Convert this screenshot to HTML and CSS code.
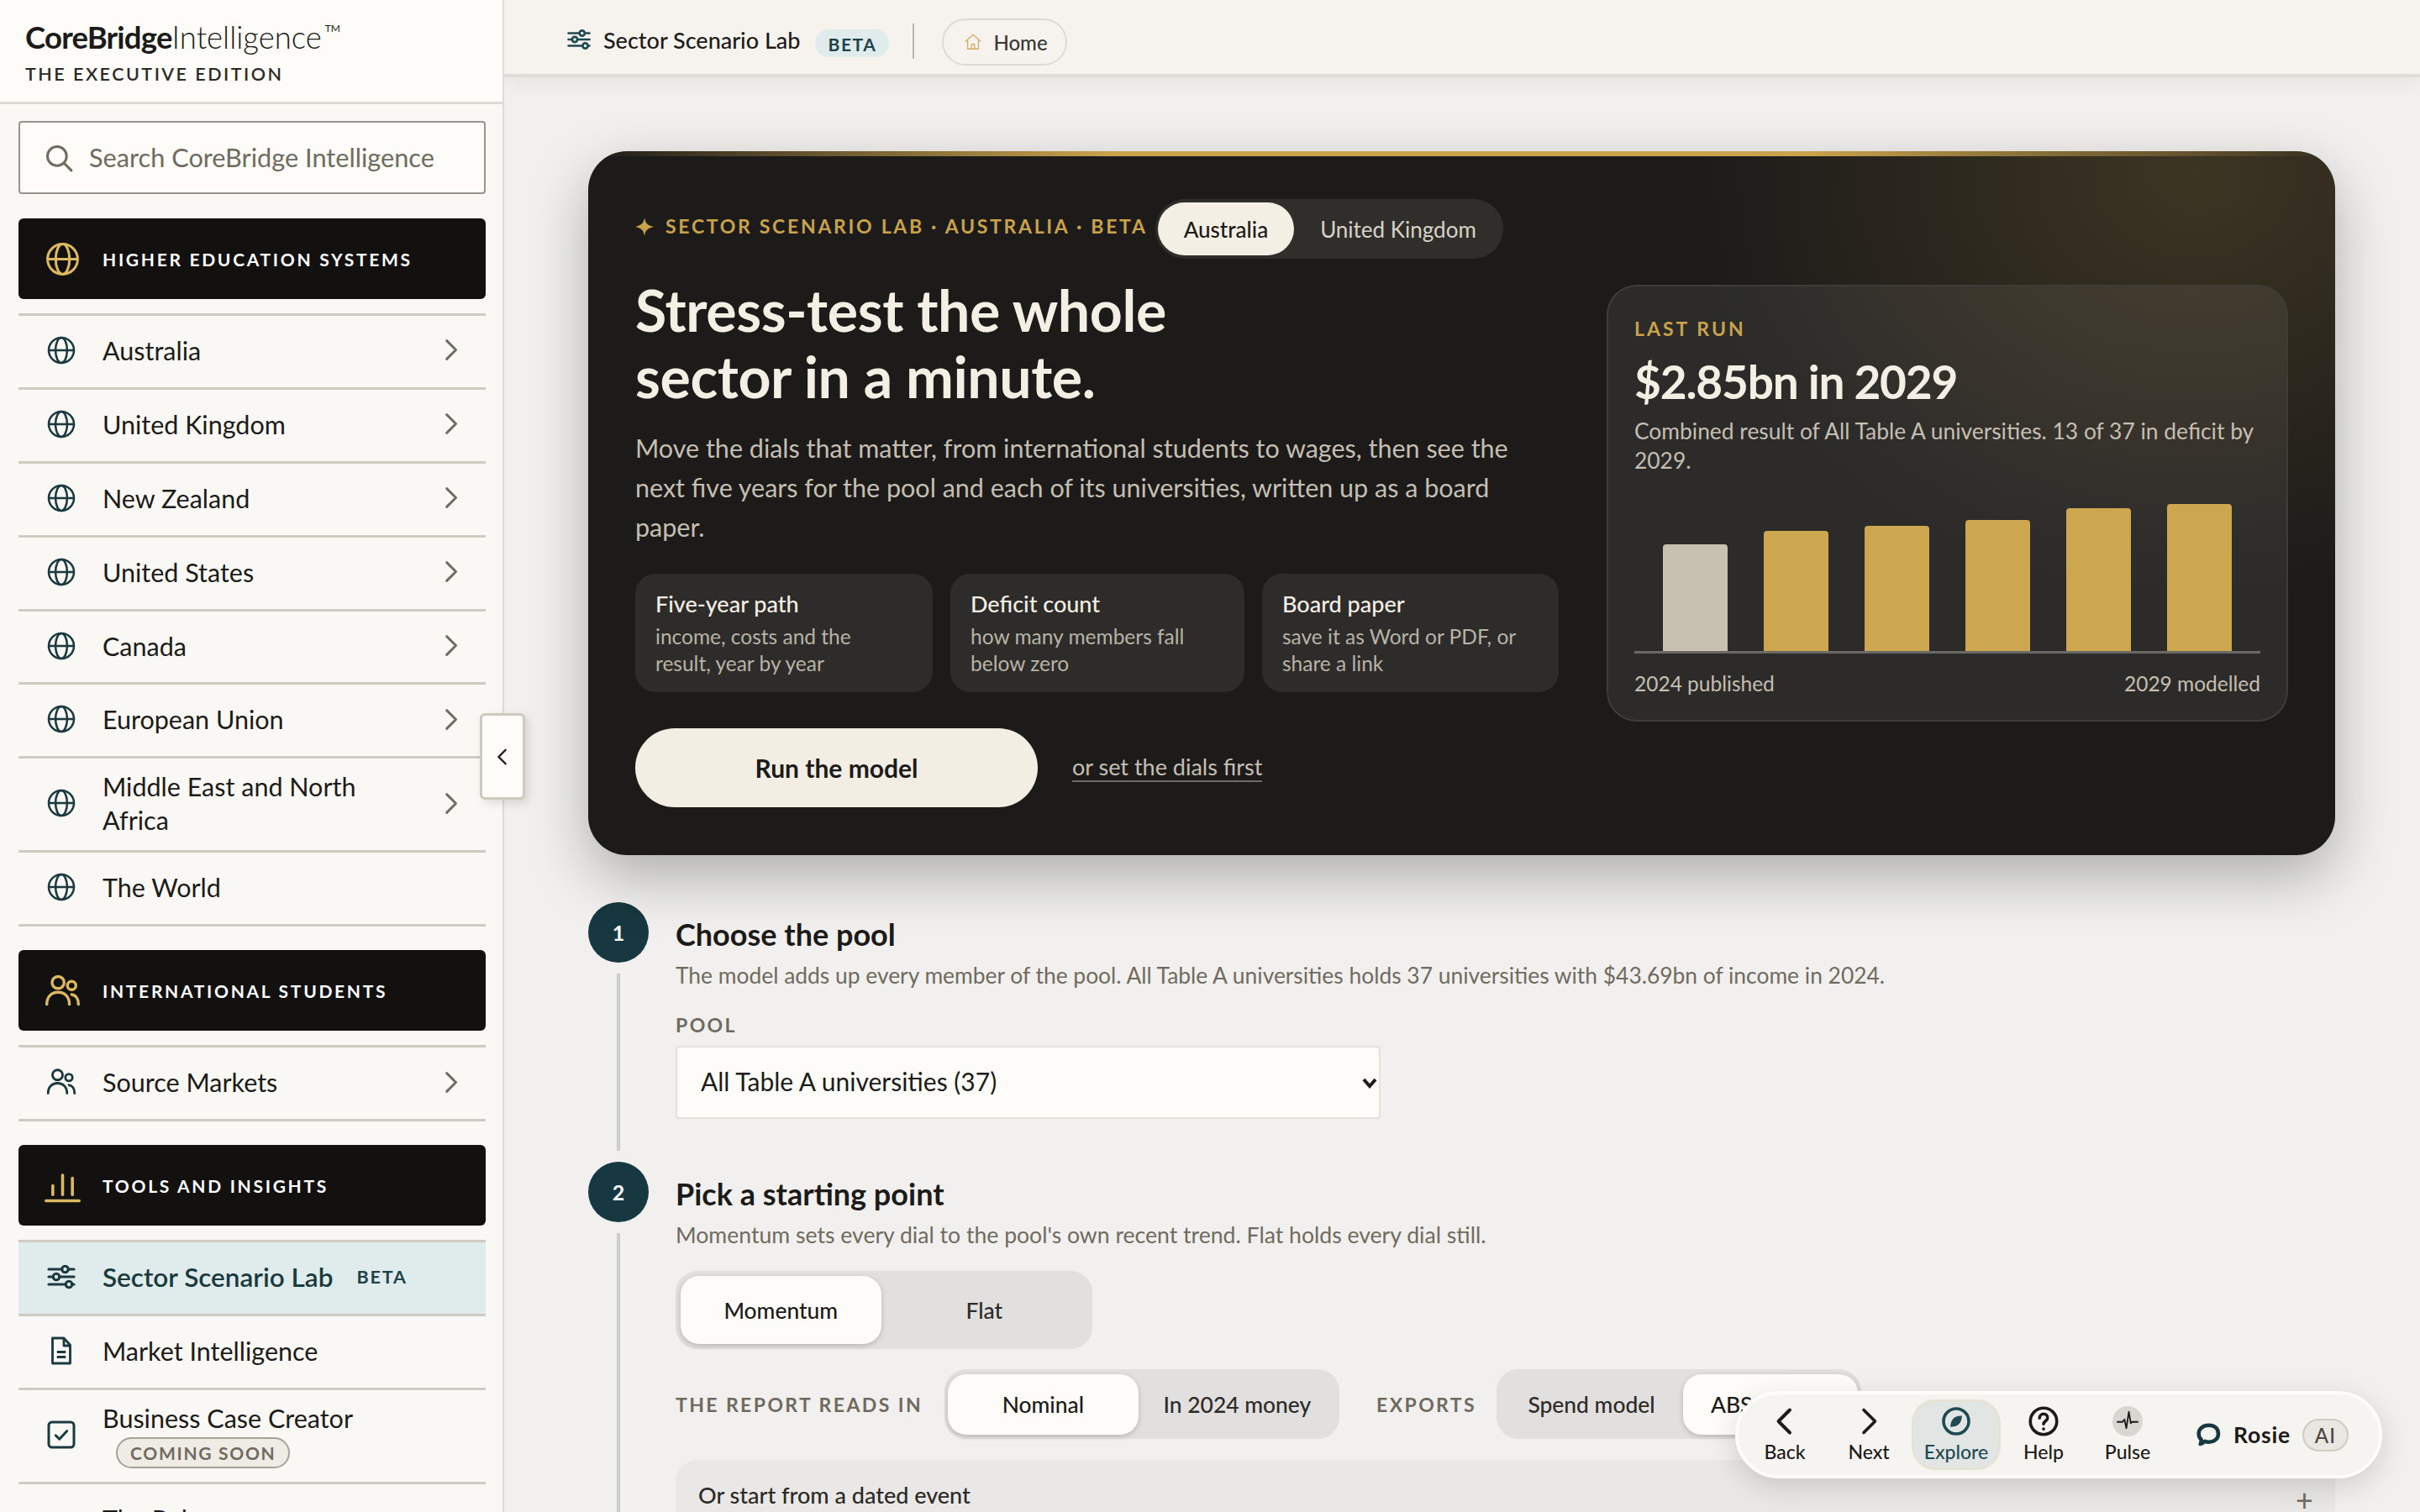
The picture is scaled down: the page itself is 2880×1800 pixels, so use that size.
FILE: index.html
```html
<!DOCTYPE html>
<html lang="en">
<head>
<meta charset="utf-8">
<title>Sector Scenario Lab</title>
<link rel="stylesheet" href="styles.css">
</head>
<body>
<svg class="sprite" aria-hidden="true">
  <symbol id="i-globe" viewBox="0 0 24 24"><g fill="none" stroke="currentColor" stroke-width="1.700"><circle cx="12" cy="12" r="10"/><ellipse cx="12" cy="12" rx="4.600" ry="10"/><path d="M2 12h20"/></g></symbol>
  <symbol id="i-users" viewBox="0 0 24 24"><g fill="none" stroke="currentColor" stroke-width="1.900" stroke-linecap="round"><circle cx="9" cy="6.500" r="4"/><circle cx="18" cy="8.500" r="2.800"/><path d="M1.500 21c0-5 3-8 7.500-8s7.500 3 7.500 8"/><path d="M18 14.500c2.800.3 4.500 3 4.500 6.500"/></g></symbol>
  <symbol id="i-bars" viewBox="0 0 24 24"><g fill="none" stroke="currentColor" stroke-width="2" stroke-linecap="round"><path d="M1 22h22"/><path d="M5.500 12v6"/><path d="M12 5v13"/><path d="M18.500 7v11"/></g></symbol>
  <symbol id="i-sliders" viewBox="0 0 24 24"><g fill="none" stroke="currentColor" stroke-width="2.100" stroke-linecap="round"><path d="M2 6h10.500M17.500 6H22M2 12h3.500M10.500 12H22M2 18h13.500M20.500 18H22"/><circle cx="15" cy="6" r="2.500"/><circle cx="8" cy="12" r="2.500"/><circle cx="18" cy="18" r="2.500"/></g></symbol>
  <symbol id="i-doc" viewBox="0 0 24 24"><g fill="none" stroke="currentColor" stroke-width="1.900" stroke-linejoin="round"><path d="M5 2h9l5 5.500V22H5z"/><path d="M14 2v6h5"/><path d="M8.500 13h7M8.500 17h7"/></g></symbol>
  <symbol id="i-check" viewBox="0 0 24 24"><g fill="none" stroke="currentColor" stroke-width="2" stroke-linecap="round" stroke-linejoin="round"><rect x="2" y="2" width="20" height="20" rx="2.500"/><path d="M7.500 12.500l3 3 6-6.500"/></g></symbol>
  <symbol id="i-chev-r" viewBox="0 0 24 24"><path d="M8 3l9 9-9 9" fill="none" stroke="currentColor" stroke-width="2.400" stroke-linecap="round" stroke-linejoin="round"/></symbol>
  <symbol id="i-chev-l" viewBox="0 0 24 24"><path d="M16 3l-9 9 9 9" fill="none" stroke="currentColor" stroke-width="2.600" stroke-linecap="round" stroke-linejoin="round"/></symbol>
  <symbol id="i-chev-d" viewBox="0 0 20 14"><path d="M3 3l7 8 7-8" fill="none" stroke="currentColor" stroke-width="4"/></symbol>
  <symbol id="i-search" viewBox="0 0 24 24"><g fill="none" stroke="currentColor" stroke-width="2.100" stroke-linecap="round"><circle cx="10.500" cy="10.500" r="8"/><path d="M16.500 16.500l6 6"/></g></symbol>
  <symbol id="i-home" viewBox="0 0 24 24"><g fill="none" stroke="currentColor" stroke-width="1.400" stroke-linejoin="round"><path d="M2 11.500L12 2.500l10 9"/><path d="M5 9.500V21h14V9.500"/><path d="M10 21v-6h4v6"/></g></symbol>
  <symbol id="i-star" viewBox="0 0 24 24"><path d="M12 0c1.200 7.500 3.500 9.800 12 12-8.500 2.200-10.800 4.500-12 12-1.200-7.500-3.500-9.800-12-12 8.500-2.200 10.800-4.500 12-12z" fill="currentColor"/></symbol>
  <symbol id="i-compass" viewBox="0 0 24 24"><circle cx="12" cy="12" r="10" fill="none" stroke="currentColor" stroke-width="2.400"/><path d="M16.500 7.500c.2 4-1.800 7.500-5.500 8.500l-3.500.5c-.2-4 1.800-7.500 5.500-8.500z" fill="currentColor"/></symbol>
  <symbol id="i-help" viewBox="0 0 24 24"><g fill="none" stroke="currentColor" stroke-width="2.400" stroke-linecap="round"><circle cx="12" cy="12" r="10.500"/><path d="M8.800 9.500c0-2 1.400-3.300 3.200-3.300s3.200 1.200 3.200 3c0 2.600-3.200 2.600-3.200 5"/><path d="M12 18v.2"/></g></symbol>
  <symbol id="i-pulse" viewBox="0 0 24 24"><circle cx="12" cy="12" r="12" fill="#d9d6d1"/><path d="M3.500 12.500h4.500l1.500-2 1.500 7 2-13 1.500 9 1-1h5" fill="none" stroke="#1c1b19" stroke-width="1.200" stroke-linejoin="round"/></symbol>
  <symbol id="i-line" viewBox="0 0 24 24"><path d="M2 17h5l2-3 3 4 3-4 2 3h5" fill="none" stroke="currentColor" stroke-width="1.900" stroke-linejoin="round"/></symbol>
  <symbol id="i-chat" viewBox="0 0 24 24"><path d="M12.500 3.500c5 0 8.500 3 8.500 7.500s-3.500 7.500-8.500 7.500c-1.500 0-2.500-.2-3.500-.6-.8.900-2 1.900-4 2.300.6-1.300.9-2.800.7-4C4 14.700 3.500 12.800 3.500 11c0-4.500 4-7.500 9-7.500z" fill="none" stroke="currentColor" stroke-width="3.400" stroke-linejoin="round"/></symbol>
</svg>

<div class="app">
  <aside class="sidebar">
    <header class="brand">
      <div class="brand-name"><b>CoreBridge</b><span>Intelligence</span><sup>TM</sup></div>
      <div class="brand-sub">THE EXECUTIVE EDITION</div>
    </header>
    <div class="side-body">
      <label class="search">
        <svg class="search-icon"><use href="#i-search"/></svg>
        <span>Search CoreBridge Intelligence</span>
      </label>

      <div class="sec-head"><svg class="sec-icon"><use href="#i-globe"/></svg><span>HIGHER EDUCATION SYSTEMS</span></div>
      <nav class="nav-list">
        <a class="nav-row"><svg class="nav-icon"><use href="#i-globe"/></svg><span class="nav-text">Australia</span><svg class="nav-chev"><use href="#i-chev-r"/></svg></a>
        <a class="nav-row"><svg class="nav-icon"><use href="#i-globe"/></svg><span class="nav-text">United Kingdom</span><svg class="nav-chev"><use href="#i-chev-r"/></svg></a>
        <a class="nav-row"><svg class="nav-icon"><use href="#i-globe"/></svg><span class="nav-text">New Zealand</span><svg class="nav-chev"><use href="#i-chev-r"/></svg></a>
        <a class="nav-row"><svg class="nav-icon"><use href="#i-globe"/></svg><span class="nav-text">United States</span><svg class="nav-chev"><use href="#i-chev-r"/></svg></a>
        <a class="nav-row"><svg class="nav-icon"><use href="#i-globe"/></svg><span class="nav-text">Canada</span><svg class="nav-chev"><use href="#i-chev-r"/></svg></a>
        <a class="nav-row"><svg class="nav-icon"><use href="#i-globe"/></svg><span class="nav-text">European Union</span><svg class="nav-chev"><use href="#i-chev-r"/></svg></a>
        <a class="nav-row nav-row-tall"><svg class="nav-icon"><use href="#i-globe"/></svg><span class="nav-text">Middle East and North<br>Africa</span><svg class="nav-chev"><use href="#i-chev-r"/></svg></a>
        <a class="nav-row"><svg class="nav-icon"><use href="#i-globe"/></svg><span class="nav-text">The World</span></a>
      </nav>

      <div class="sec-head"><svg class="sec-icon"><use href="#i-users"/></svg><span>INTERNATIONAL STUDENTS</span></div>
      <nav class="nav-list">
        <a class="nav-row"><svg class="nav-icon"><use href="#i-users"/></svg><span class="nav-text">Source Markets</span><svg class="nav-chev"><use href="#i-chev-r"/></svg></a>
      </nav>

      <div class="sec-head"><svg class="sec-icon"><use href="#i-bars"/></svg><span>TOOLS AND INSIGHTS</span></div>
      <nav class="nav-list">
        <a class="nav-row nav-row-active"><svg class="nav-icon"><use href="#i-sliders"/></svg><span class="nav-text">Sector Scenario Lab</span><span class="nav-beta">BETA</span></a>
        <a class="nav-row"><svg class="nav-icon"><use href="#i-doc"/></svg><span class="nav-text">Market Intelligence</span></a>
        <a class="nav-row nav-row-tall"><svg class="nav-icon"><use href="#i-check"/></svg><span class="nav-stack"><span class="nav-text">Business Case Creator</span><span class="soon">COMING SOON</span></span></a>
        <a class="nav-row"><svg class="nav-icon"><use href="#i-line"/></svg><span class="nav-text">The Pulse</span></a>
      </nav>
    </div>
    <button class="collapse" type="button" aria-label="Collapse"><svg><use href="#i-chev-l"/></svg></button>
  </aside>

  <div class="main">
    <header class="topbar">
      <svg class="top-icon"><use href="#i-sliders"/></svg>
      <span class="top-title">Sector Scenario Lab</span>
      <span class="top-beta">BETA</span>
      <span class="top-div"></span>
      <a class="home-pill"><svg class="home-icon"><use href="#i-home"/></svg><span>Home</span></a>
    </header>

    <main class="content">
      <section class="hero">
        <div class="hero-left">
          <div class="eyebrow-row">
            <svg class="eyebrow-star"><use href="#i-star"/></svg>
            <span class="eyebrow">SECTOR SCENARIO LAB · AUSTRALIA · BETA</span>
            <div class="hero-toggle">
              <span class="ht-opt ht-on">Australia</span>
              <span class="ht-opt">United Kingdom</span>
            </div>
          </div>
          <h1 class="hero-title">Stress-test the whole<br>sector in a minute.</h1>
          <p class="hero-desc">Move the dials that matter, from international students to wages, then see the next five years for the pool and each of its universities, written up as a board paper.</p>
          <div class="features">
            <div class="feature"><h3>Five-year path</h3><p>income, costs and the result, year by year</p></div>
            <div class="feature"><h3>Deficit count</h3><p>how many members fall below zero</p></div>
            <div class="feature"><h3>Board paper</h3><p>save it as Word or PDF, or share a link</p></div>
          </div>
          <div class="hero-actions">
            <button class="run-btn" type="button">Run the model</button>
            <a class="dial-link">or set the dials first</a>
          </div>
        </div>
        <aside class="run-card">
          <div class="run-label">LAST RUN</div>
          <div class="run-value">$2.85bn in 2029</div>
          <p class="run-desc">Combined result of All Table A universities. 13 of 37 in deficit by 2029.</p>
          <div class="chart">
            <span class="bar bar-base" style="height:127px"></span>
            <span class="bar" style="height:143px"></span>
            <span class="bar" style="height:149px"></span>
            <span class="bar" style="height:156px"></span>
            <span class="bar" style="height:170px"></span>
            <span class="bar" style="height:175px"></span>
          </div>
          <div class="chart-labels"><span>2024 published</span><span>2029 modelled</span></div>
        </aside>
      </section>

      <section class="step step-one">
        <div class="rail"><span class="step-num">1</span><span class="rail-line"></span></div>
        <div class="step-body">
          <h2 class="step-title">Choose the pool</h2>
          <p class="step-desc">The model adds up every member of the pool. All Table A universities holds 37 universities with $43.69bn of income in 2024.</p>
          <div class="field-label">POOL</div>
          <div class="select-wrap">
            <select class="pool-select"><option>All Table A universities (37)</option></select>
            <svg class="select-chev"><use href="#i-chev-d"/></svg>
          </div>
        </div>
      </section>

      <section class="step">
        <div class="rail"><span class="step-num">2</span><span class="rail-line"></span></div>
        <div class="step-body">
          <h2 class="step-title">Pick a starting point</h2>
          <p class="step-desc step-desc-wide">Momentum sets every dial to the pool's own recent trend. Flat holds every dial still.</p>
          <div class="seg seg-start">
            <span class="seg-opt seg-on seg-w240">Momentum</span>
            <span class="seg-opt seg-w250">Flat</span>
          </div>
          <div class="opt-row">
            <span class="field-label field-inline">THE REPORT READS IN</span>
            <div class="seg seg-small seg-reads">
              <span class="seg-opt seg-on seg-w228">Nominal</span>
              <span class="seg-opt seg-w236">In 2024 money</span>
            </div>
            <span class="field-label field-inline field-exports">EXPORTS</span>
            <div class="seg seg-small seg-exports">
              <span class="seg-opt seg-w219">Spend model</span>
              <span class="seg-opt seg-on seg-abs">ABS tables</span>
            </div>
          </div>
          <div class="event-box"><span>Or start from a dated event</span><span class="event-plus">+</span></div>
        </div>
      </section>
    </main>
  </div>

  <div class="dock">
    <a class="dock-item"><svg class="dock-chev"><use href="#i-chev-l"/></svg><span>Back</span></a>
    <a class="dock-item"><svg class="dock-chev"><use href="#i-chev-r"/></svg><span>Next</span></a>
    <a class="dock-item dock-on"><svg class="dock-icon"><use href="#i-compass"/></svg><span>Explore</span></a>
    <a class="dock-item"><svg class="dock-icon"><use href="#i-help"/></svg><span>Help</span></a>
    <a class="dock-item"><svg class="dock-icon"><use href="#i-pulse"/></svg><span>Pulse</span></a>
    <a class="dock-rosie"><svg class="rosie-icon"><use href="#i-chat"/></svg><span class="rosie-name">Rosie</span><span class="rosie-ai">AI</span></a>
  </div>
</div>
</body>
</html>
```
FILE: styles.css
```css
* { box-sizing: border-box; }
html, body { margin: 0; padding: 0; height: 1800px; overflow: hidden; }
body { font-family: "Lato", "Liberation Sans", sans-serif; color: #1c1b19; background: #f1f0ee; }
.sprite { display: none; }
p, h1, h2, h3 { margin: 0; }
.app { position: relative; display: flex; width: 2880px; height: 1800px; overflow: hidden; }

/* sidebar */
.sidebar { position: relative; width: 600px; flex: none; height: 1800px; background: #faf8f4; border-right: 2px solid #dddbd6; overflow: visible; z-index: 2; }
.brand { height: 124px; background: #fdfcf8; border-bottom: 3px solid #dcdad3; padding: 24px 30px 0; }
.brand-name { font-size: 36.500px; line-height: 40px; white-space: nowrap; color: #1c1b19; }
.brand-name b { font-weight: 700; letter-spacing: -0.800px; }
.brand-name span { font-weight: 300; }
.brand-name sup { font-size: 12px; vertical-align: 20px; line-height: 0; margin-left: 4px; }
.brand-sub { margin-top: 10px; font-size: 21.500px; line-height: 28px; font-weight: 600; letter-spacing: 2.500px; color: #2b2a27; }
.side-body { padding: 20px 20px 0 22px; height: 1676px; overflow: hidden; }
.search { display: flex; align-items: center; gap: 19px; height: 87px; padding-left: 29px; background: #fdfcf8; border: 2px solid #95938b; border-radius: 4px; font-size: 30.700px; color: #6f6b60; margin-bottom: 29px; }
.search-icon { width: 34px; height: 34px; color: #6f6b60; }
.sec-head { display: flex; align-items: center; height: 96px; background: #121110; border-radius: 6px; padding-left: 31px; color: #fff; font-size: 21px; font-weight: 700; letter-spacing: 2.700px; gap: 26px; margin-bottom: 17px; }
.sec-icon { width: 43px; height: 43px; color: #dcb860; flex: none; }
.nav-list { border-top: 3px solid #cecbc3; margin-bottom: 28px; }
.nav-row { display: flex; align-items: center; height: 87.900px; border-bottom: 3px solid #cecbc3; padding: 0 0 3px 33px; gap: 31px; font-size: 30.500px; line-height: 40px; color: #1c1b19; }
.nav-row-tall { height: 112px; }
.nav-icon { width: 36px; height: 36px; color: #1a3a40; flex: none; }
.nav-text { flex: none; width: auto; }
.nav-chev { width: 29px; height: 29px; color: #6f6b60; margin-left: auto; margin-right: 27px; flex: none; }
.nav-row-active { background: #e0ebeb; color: #1a3a40; height: 88px; }
.nav-row-active .nav-text { font-size: 31.500px; font-weight: 600; }
.nav-beta { font-size: 21.500px; font-weight: 700; letter-spacing: 1.900px; margin-left: -3px; color: #1f4349; }
.nav-stack { display: flex; flex-direction: column; align-items: flex-start; }
.soon { display: inline-flex; align-items: center; height: 37px; margin: 3px 0 0 16px; padding: 0 15px; border: 2px solid #a5a299; border-radius: 19px; background: #efece6; color: #6f6b60; font-size: 21px; font-weight: 700; letter-spacing: 1.700px; }
.collapse { position: absolute; left: 571px; top: 849px; width: 54px; height: 103px; padding: 0; display: flex; align-items: center; justify-content: center; background: #fdfcf8; border: 3px solid #cdc9bc; border-radius: 6px; box-shadow: 4px 4px 12px rgba(0,0,0,.12); color: #1c1b19; }
.collapse svg { width: 22px; height: 22px; }

/* main */
.main { flex: 1; min-width: 0; background: #f1f0ee; }
.topbar { display: flex; align-items: center; height: 92px; background: #f6f3ee; border-bottom: 4px solid #dfddd8; box-shadow: 0 6px 24px rgba(0,0,0,.06); padding: 12px 0 0 74px; position: relative; z-index: 1; }
.top-icon { width: 30px; height: 30px; color: #1f4a52; flex: none; margin-bottom: 6px; }
.top-title { margin-left: 14px; padding-bottom: 6px; font-size: 27px; font-weight: 500; color: #1c1b19; }
.top-beta { margin-left: 18px; padding: 5px 15px 3px; border-radius: 17px; background: #e0ebeb; color: #1f4349; font-size: 21px; font-weight: 700; letter-spacing: 1.600px; position: relative; top: 1px; }
.top-div { width: 2px; height: 42px; background: #b9b6ad; margin-left: 28px; margin-bottom: 2px; }
.home-pill { display: flex; align-items: center; height: 56px; margin-left: 33px; padding: 0 21px 0 24px; border: 2px solid #dedbd3; border-radius: 28px; gap: 13px; font-size: 24px; font-weight: 500; color: #3a3834; }
.home-icon { width: 22px; height: 22px; color: #d2ae62; }

.content { padding: 88px 101px 0 100px; }
.hero { position: relative; display: grid; grid-template-columns: 1099px 811px; column-gap: 57px; align-items: center; padding: 57px 56px 57px; border-radius: 46px; background: radial-gradient(600px 500px at 92% 3%, rgba(201,162,75,.19), rgba(201,162,75,0) 100%), #1c1b19; box-shadow: 0 26px 70px rgba(0,0,0,.28); overflow: hidden; }
.hero::before { content: ""; position: absolute; left: 0; right: 0; top: 0; height: 6px; background: linear-gradient(90deg, rgba(201,162,75,0), #c9a24b 30%, #c9a24b 70%, rgba(201,162,75,0)); }
.eyebrow-row { display: flex; align-items: center; }
.eyebrow-star { width: 22px; height: 24px; color: #c9a24b; flex: none; margin-bottom: 5px; }
.eyebrow { margin-left: 14px; padding-bottom: 7px; font-size: 23px; font-weight: 700; letter-spacing: 2.700px; color: #c9a24b; white-space: nowrap; }
.hero-toggle { display: flex; align-items: center; height: 71px; margin-left: 9px; width: 414px; padding: 3px; border-radius: 36px; background: #2f2e2b; flex: none; }
.ht-opt { display: flex; align-items: center; justify-content: center; height: 63px; font-size: 26px; color: #d8d3c8; padding: 0 31px; border-radius: 32px; white-space: nowrap; }
.ht-on { background: #f4efe5; color: #1c1b19; font-weight: 500; }
.hero-title { margin-top: 21px; font-size: 68px; line-height: 79px; font-weight: 700; color: #f4efe5; letter-spacing: -.4px; }
.hero-desc { margin-top: 23px; width: 1060px; font-size: 30.500px; line-height: 47px; color: #c5bfb3; }
.features { display: grid; grid-template-columns: 354px 350px 353px; column-gap: 21px; margin-top: 32px; }
.feature { height: 141px; padding: 19px 24px; background: #2d2c2a; border-radius: 24px; }
.feature h3 { font-size: 27px; line-height: 34px; font-weight: 500; color: #f4efe5; }
.feature p { max-width: 290px; margin-top: 6px; font-size: 24.500px; line-height: 32px; color: #b9b3a7; }
.hero-actions { display: flex; align-items: center; margin-top: 43px; }
.run-btn { width: 479px; height: 94px; border: 0; border-radius: 47px; background: #f2eee4; color: #1c1b19; font: 700 30px "Lato", sans-serif; }
.dial-link { margin-left: 41px; font-size: 27px; line-height: 32px; color: #c5bfb3; border-bottom: 2px solid #6f6b63; }
.run-card { height: 520px; padding: 35px 31px 0; border: 2px solid #3d3c39; border-radius: 36px; background: rgba(255,255,255,.07); }
.run-label { font-size: 23px; line-height: 30px; font-weight: 700; letter-spacing: 3px; color: #c9a24b; }
.run-value { margin-top: 14px; font-size: 55px; line-height: 68px; font-weight: 700; letter-spacing: -1.200px; color: #f4efe5; }
.run-desc { margin-top: 8px; font-size: 26.400px; line-height: 35px; color: #c5bfb3; }
.chart { display: flex; align-items: flex-end; justify-content: space-between; height: 212px; padding: 0 34px; border-bottom: 3px solid #6a6964; }
.bar { width: 77px; background: #cda74f; border-radius: 4px 4px 0 0; }
.bar-base { background: #c8c0b1; }
.chart-labels { display: flex; justify-content: space-between; margin-top: 21px; font-size: 24.500px; line-height: 30px; color: #c5bfb3; }

.step { display: grid; grid-template-columns: 72px 1fr; column-gap: 32px; }
.step-one { margin-top: 56px; }
.rail { display: flex; flex-direction: column; align-items: center; }
.step-num { display: flex; align-items: center; justify-content: center; width: 72px; height: 72px; flex: none; border-radius: 50%; background: #173840; color: #fff; font-size: 25px; font-weight: 700; }
.rail-line { flex: 1; width: 4px; margin: 13px 0; background: #c9cccb; }
.step-body { padding-top: 16px; min-width: 0; }
.step-one .step-body { padding-bottom: 51px; }
.step-title { font-size: 36px; line-height: 44px; font-weight: 700; color: #1c1b19; }
.step-desc { margin-top: 9px; font-size: 26.400px; line-height: 36px; color: #6f6b60; }
.step-desc-wide { font-size: 26.600px; }
.field-label { margin-top: 27px; margin-bottom: 11px; font-size: 23px; line-height: 28px; font-weight: 700; letter-spacing: 2.400px; color: #6f6b60; }
.select-wrap { position: relative; width: 839px; }
.pool-select { display: block; width: 100%; height: 87px; padding: 0 0 3px 28px; appearance: none; background: #fdfcf8; border: 2px solid #e3e1db; border-radius: 4px; font-family: "Lato", sans-serif; font-size: 30px; color: #1c1b19; }
.select-chev { position: absolute; right: 3px; top: 37px; width: 20px; height: 14px; color: #1c1b19; }
.seg { display: flex; align-items: center; padding: 0 6px; background: #e1e0de; border-radius: 26px; }
.seg-start { width: 496px; height: 93px; margin-top: 25px; }
.seg-small { height: 83px; padding: 0 4px; }
.seg-opt { display: flex; align-items: center; justify-content: center; height: 100%; font-size: 26.400px; font-weight: 500; color: #2d2b28; white-space: nowrap; }
.seg-on { height: calc(100% - 12px); background: #fdfcf8; border-radius: 22px; box-shadow: 0 2px 6px rgba(0,0,0,.2); color: #1c1b19; }
.seg-small .seg-on { height: 72px; }
.seg-w240 { width: 240px; }
.seg-w250 { width: 247px; }
.seg-w228 { width: 229px; }
.seg-w236 { width: 238px; }
.seg-w219 { width: 219px; }
.seg-abs { width: 209px; justify-content: flex-start; padding-left: 33px; }
.opt-row { display: flex; align-items: center; margin-top: 24px; }
.field-inline { margin: 0; white-space: nowrap; }
.seg-reads { margin-left: 26px; width: 470px; }
.field-exports { margin-left: 44px; }
.seg-exports { margin-left: 24px; width: 434px; }
.event-box { display: flex; align-items: flex-start; justify-content: space-between; height: 200px; margin-top: 25px; padding: 25px 26px 25px 27px; background: #e9e8e6; border-radius: 26px; font-size: 27px; line-height: 34px; font-weight: 500; color: #2b2a27; }
.event-plus { font-size: 36px; line-height: 24px; font-weight: 400; color: #6f6b60; margin-top: 10px; }

/* dock */
.dock { position: absolute; left: 2065px; top: 1656px; width: 770px; height: 104px; display: flex; align-items: center; padding-left: 5px; background: #f6f4f0; border: 4px solid #fdfcf9; border-radius: 52px; box-shadow: 0 10px 34px rgba(0,0,0,.14); z-index: 5; }
.dock-item { display: flex; flex-direction: column; align-items: center; justify-content: center; gap: 4px; width: 100px; height: 84px; flex: none; font-size: 23px; font-weight: 500; line-height: 28px; color: #1c1b19; }
.dock-on { width: 106px; margin: 0 1px; border: 3px solid #e6e3d6; background: #e1e5e3; border-radius: 28px; color: #1f4a52; }
.dock-icon { width: 36px; height: 36px; }
.dock-chev { width: 38px; height: 36px; }
.dock-rosie { display: flex; align-items: center; margin-left: 30px; font-size: 26.500px; font-weight: 700; letter-spacing: .8px; }
.rosie-icon { width: 32px; height: 32px; color: #173840; }
.rosie-name { margin-left: 14px; }
.rosie-ai { display: flex; align-items: center; justify-content: center; width: 55px; height: 39px; margin-left: 14px; border: 2px solid #cfccc4; border-radius: 20px; background: #e9e7e1; color: #4a4843; font-size: 24px; font-weight: 500; letter-spacing: 1px; }
```
